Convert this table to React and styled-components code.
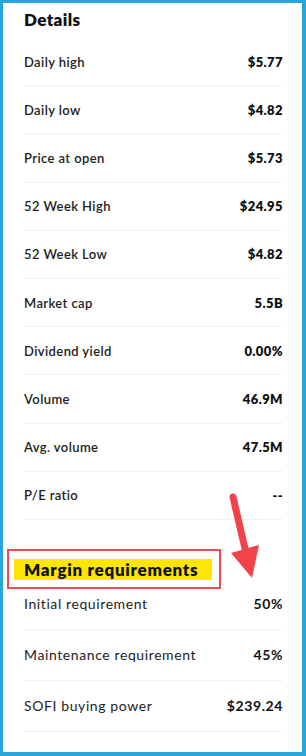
import React from 'react';
import styled, { createGlobalStyle } from 'styled-components';

const GlobalStyle = createGlobalStyle`
  html, body { margin: 0; padding: 0; background: #fff; }
  body { font-family: 'Lato', 'Noto Sans', sans-serif; color: #1d1d1f; }
`;

const details = [
  ['Daily high', '$5.77'],
  ['Daily low', '$4.82'],
  ['Price at open', '$5.73'],
  ['52 Week High', '$24.95'],
  ['52 Week Low', '$4.82'],
  ['Market cap', '5.5B'],
  ['Dividend yield', '0.00%'],
  ['Volume', '46.9M'],
  ['Avg. volume', '47.5M'],
  ['P/E ratio', '--'],
];

const margin = [
  ['Initial requirement', '50%'],
  ['Maintenance requirement', '45%'],
  ['SOFI buying power', '$239.24'],
];

const App = () => (
  <>
    <GlobalStyle />
    <Frame>
      <Content>
        <Title>Details</Title>
        <List>
          {details.map(([label, value]) => (
            <Row key={label}>
              <Label>{label}</Label>
              <Value>{value}</Value>
            </Row>
          ))}
        </List>
        <Callout>
          <Highlight>Margin requirements</Highlight>
        </Callout>
        <List>
          {margin.map(([label, value]) => (
            <MarginRow key={label}>
              <MarginLabel>{label}</MarginLabel>
              <MarginValue>{value}</MarginValue>
            </MarginRow>
          ))}
        </List>
      </Content>
      <Arrow width="40" height="100" viewBox="0 0 40 100">
        <line x1="6" y1="6" x2="20" y2="66" stroke="#f2434b" strokeWidth="7" strokeLinecap="round" />
        <polygon points="4,62 32,54 25,87" fill="#f2434b" />
      </Arrow>
    </Frame>
  </>
);

const Frame = styled.div`
  position: relative;
  box-sizing: border-box;
  width: 306px;
  height: 756px;
  border-style: solid;
  border-color: #2ba4dc;
  border-width: 3px 4px 4px 3px;
  overflow: hidden;
`;

const Content = styled.div`
  padding: 0 19px 0 21px;
`;

const Title = styled.h2`
  margin: 0;
  padding-top: 6px;
  height: 29px;
  font-size: 17px;
  font-weight: 800;
  line-height: 22px;
  letter-spacing: 0.4px;
  color: #111;
`;

const List = styled.div`
  display: flex;
  flex-direction: column;
`;

const Row = styled.div`
  display: flex;
  align-items: center;
  justify-content: space-between;
  height: 48.2px;
  box-sizing: border-box;
  border-bottom: 1px solid #f1f1f1;
  font-size: 13px;
  letter-spacing: 0.4px;
`;

const Label = styled.span`
  font-weight: 600;
  color: #222;
`;

const Value = styled.span`
  font-weight: 800;
  color: #111;
`;

const Callout = styled.div`
  align-self: flex-start;
  width: 214px;
  box-sizing: border-box;
  margin: 29px 0 -10px -17px;
  height: 40px;
  border: 2px solid #f04a50;
  padding: 8px 0 0 5px;
`;

const Highlight = styled.div`
  display: inline-block;
  background: #ffe600;
  padding: 0 10px;
  height: 21px;
  width: 198px;
  box-sizing: border-box;
  font-size: 17px;
  font-weight: 800;
  line-height: 21px;
  letter-spacing: 0.7px;
  white-space: nowrap;
  color: #111;
`;

const MarginRow = styled.div`
  display: flex;
  align-items: center;
  justify-content: space-between;
  height: 51px;
  box-sizing: border-box;
  border-bottom: 1px solid #f1f1f1;
  font-size: 14px;
  letter-spacing: 0.6px;
`;

const MarginLabel = styled.span`
  font-weight: 400;
  color: #222;
`;

const MarginValue = styled.span`
  font-weight: 700;
  color: #111;
`;

const Arrow = styled.svg`
  position: absolute;
  left: 224px;
  top: 488px;
`;

export default App;
